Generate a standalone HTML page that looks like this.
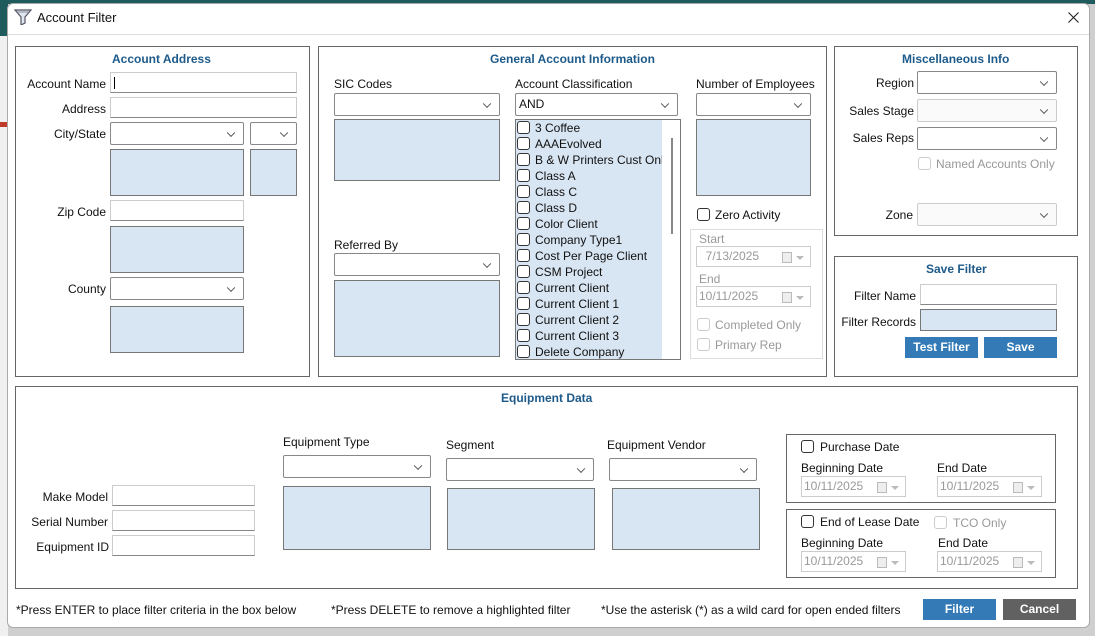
<!DOCTYPE html>
<html><head><meta charset="utf-8"><style>
*{box-sizing:border-box;margin:0;padding:0}
body{width:1095px;height:636px;overflow:hidden;background:#cfcfcf;font-family:"Liberation Sans",Arial,sans-serif;font-size:12px;color:#111;position:relative}
.a{position:absolute}
.dlg{left:7px;top:3px;width:1083px;height:625px;background:#fff;border:1px solid #aaa;border-radius:6px;overflow:hidden}
.box{position:absolute;border:1px solid #666}
.t{position:absolute;font-weight:bold;color:#1d5a8a;white-space:nowrap}
.l{position:absolute;white-space:nowrap;line-height:14px}
.r{text-align:right}
.in{position:absolute;border:1px solid #ccc;border-bottom-color:#888;background:#fff}
.sel{position:absolute;border:1px solid #888;border-radius:2px;background:#fff}
.sel::after{content:"";position:absolute;right:9px;top:50%;width:5px;height:5px;border-right:1px solid #555;border-bottom:1px solid #555;transform:translateY(-70%) rotate(45deg)}
.sel.d{border-color:#ccc;background:#fafafa}
.lst{position:absolute;border:1px solid #777;background:#d8e5f2}
.cb{position:absolute;width:13px;height:13px;border:1px solid #333;border-radius:3px;background:#fff}
.cb.d{border-color:#ccc}
.g{color:#999}
.dt{position:absolute;border:1px solid #ccc;background:#fff;color:#999;padding-left:2px;line-height:19px}
.dt::after{content:"";position:absolute;right:18px;top:5px;width:8px;height:9px;border:1px solid #bbb;background:#eee}
.dt::before{content:"";position:absolute;right:6px;top:9px;border:4px solid transparent;border-top-color:#bbb;border-bottom:0}
.btn{position:absolute;background:#337ab7;color:#fff;font-weight:bold;text-align:center;line-height:21px}
</style></head><body>
<div class="a" style="left:0;top:0;width:1095px;height:4px;background:#1f5a5c"></div>
<div class="a" style="left:0;top:0;width:8px;height:36px;background:#1f5a5c"></div>
<div class="a" style="left:0;top:36px;width:8px;height:600px;background:#f0f0f0"></div>
<div class="a" style="left:0;top:122px;width:8px;height:5px;background:#c0392b"></div>
<div class="a dlg"></div>
<svg class="a" style="left:14px;top:9px" width="18" height="16" viewBox="0 0 18 16"><path d="M1 1h16l-6 7v6l-4 2V8z" fill="#dfe6ee" stroke="#556" stroke-width="1.2"/><path d="M3 3h12" stroke="#889" /></svg>
<div class="l" style="left:37px;top:11px;font-size:13px">Account Filter</div>
<svg class="a" style="left:1068px;top:12px" width="11" height="11" viewBox="0 0 11 11"><path d="M0.5 0.5L10.5 10.5M10.5 0.5L0.5 10.5" stroke="#222" stroke-width="1.1"/></svg>
<div class="a" style="left:8px;top:34px;width:1081px;height:1px;background:#ddd"></div>

<div class="box" style="left:15px;top:46px;width:295px;height:331px"></div>
<div class="t" style="left:112px;top:52px">Account Address</div>
<div class="l r" style="left:10px;top:77px;width:96px">Account Name</div>
<div class="in" style="left:110px;top:72px;width:187px;height:21px"><div class="a" style="left:3px;top:4px;width:1px;height:12px;background:#000"></div></div>
<div class="l r" style="left:10px;top:102px;width:96px">Address</div>
<div class="in" style="left:110px;top:97px;width:187px;height:21px"></div>
<div class="l r" style="left:10px;top:127px;width:96px">City/State</div>
<div class="sel" style="left:110px;top:122px;width:134px;height:23px"></div>
<div class="sel" style="left:250px;top:122px;width:47px;height:23px"></div>
<div class="lst" style="left:110px;top:149px;width:134px;height:47px"></div>
<div class="lst" style="left:250px;top:149px;width:47px;height:47px"></div>
<div class="l r" style="left:10px;top:205px;width:96px">Zip Code</div>
<div class="in" style="left:110px;top:200px;width:134px;height:21px"></div>
<div class="lst" style="left:110px;top:226px;width:134px;height:47px"></div>
<div class="l r" style="left:10px;top:282px;width:96px">County</div>
<div class="sel" style="left:110px;top:277px;width:134px;height:23px"></div>
<div class="lst" style="left:110px;top:306px;width:134px;height:47px"></div>

<div class="box" style="left:318px;top:46px;width:509px;height:331px"></div>
<div class="t" style="left:490px;top:52px">General Account Information</div>
<div class="l" style="left:334px;top:77px">SIC Codes</div>
<div class="sel" style="left:334px;top:93px;width:166px;height:23px"></div>
<div class="lst" style="left:334px;top:119px;width:166px;height:62px"></div>
<div class="l" style="left:334px;top:238px">Referred By</div>
<div class="sel" style="left:334px;top:253px;width:166px;height:23px"></div>
<div class="lst" style="left:334px;top:280px;width:166px;height:77px"></div>
<div class="l" style="left:515px;top:77px">Account Classification</div>
<div class="sel" style="left:515px;top:93px;width:163px;height:23px"><span class="a" style="left:3px;top:3px">AND</span></div>
<div class="lst" style="left:515px;top:119px;width:166px;height:241px;overflow:hidden">
<div class="a" style="left:146px;top:0;width:19px;height:240px;background:#fff"></div>
<div class="a" style="left:155px;top:18px;width:2px;height:96px;background:#888"></div>
</div>
<div class="l" style="left:696px;top:77px">Number of Employees</div>
<div class="sel" style="left:696px;top:93px;width:115px;height:23px"></div>
<div class="lst" style="left:696px;top:119px;width:115px;height:77px"></div>
<div class="cb" style="left:697px;top:208px"></div>
<div class="l" style="left:715px;top:208px">Zero Activity</div>
<div class="a" style="left:690px;top:229px;width:133px;height:130px;border:1px solid #ddd"></div>
<div class="l g" style="left:699px;top:232px">Start</div>
<div class="dt" style="left:696px;top:246px;width:115px;height:21px">&nbsp;&nbsp;7/13/2025</div>
<div class="l g" style="left:699px;top:272px">End</div>
<div class="dt" style="left:696px;top:286px;width:115px;height:21px">10/11/2025</div>
<div class="cb d" style="left:697px;top:318px"></div>
<div class="l g" style="left:715px;top:318px">Completed Only</div>
<div class="cb d" style="left:697px;top:338px"></div>
<div class="l g" style="left:715px;top:338px">Primary Rep</div>

<div class="box" style="left:834px;top:46px;width:244px;height:190px"></div>
<div class="t" style="left:902px;top:52px">Miscellaneous Info</div>
<div class="l r" style="left:834px;top:76px;width:80px">Region</div>
<div class="sel" style="left:917px;top:71px;width:140px;height:23px"></div>
<div class="l r" style="left:834px;top:104px;width:80px">Sales Stage</div>
<div class="sel d" style="left:917px;top:99px;width:140px;height:23px"></div>
<div class="l r" style="left:834px;top:131px;width:80px">Sales Reps</div>
<div class="sel" style="left:917px;top:127px;width:140px;height:23px"></div>
<div class="cb d" style="left:918px;top:157px"></div>
<div class="l g" style="left:936px;top:157px">Named Accounts Only</div>
<div class="l r" style="left:834px;top:208px;width:79px">Zone</div>
<div class="sel d" style="left:917px;top:203px;width:140px;height:23px"></div>

<div class="box" style="left:834px;top:256px;width:244px;height:121px"></div>
<div class="t" style="left:926px;top:262px">Save Filter</div>
<div class="l r" style="left:834px;top:289px;width:82px">Filter Name</div>
<div class="in" style="left:920px;top:284px;width:137px;height:21px"></div>
<div class="l r" style="left:834px;top:315px;width:82px">Filter Records</div>
<div class="a" style="left:920px;top:309px;width:137px;height:22px;background:#d8e5f2;border:1px solid #777"></div>
<div class="btn" style="left:905px;top:337px;width:73px;height:21px">Test Filter</div>
<div class="btn" style="left:984px;top:337px;width:73px;height:21px">Save</div>

<div class="box" style="left:15px;top:386px;width:1063px;height:203px"></div>
<div class="t" style="left:501px;top:391px">Equipment Data</div>
<div class="l r" style="left:10px;top:490px;width:98px">Make Model</div>
<div class="in" style="left:112px;top:485px;width:143px;height:21px"></div>
<div class="l r" style="left:10px;top:515px;width:98px">Serial Number</div>
<div class="in" style="left:112px;top:510px;width:143px;height:21px"></div>
<div class="l r" style="left:10px;top:540px;width:99px">Equipment ID</div>
<div class="in" style="left:112px;top:535px;width:143px;height:21px"></div>
<div class="l" style="left:283px;top:435px">Equipment Type</div>
<div class="sel" style="left:283px;top:455px;width:148px;height:23px"></div>
<div class="lst" style="left:283px;top:486px;width:148px;height:64px"></div>
<div class="l" style="left:446px;top:438px">Segment</div>
<div class="sel" style="left:446px;top:458px;width:148px;height:23px"></div>
<div class="lst" style="left:447px;top:488px;width:148px;height:62px"></div>
<div class="l" style="left:607px;top:438px">Equipment Vendor</div>
<div class="sel" style="left:609px;top:458px;width:148px;height:23px"></div>
<div class="lst" style="left:612px;top:488px;width:148px;height:62px"></div>

<div class="box" style="left:786px;top:434px;width:270px;height:69px"></div>
<div class="cb" style="left:801px;top:440px"></div>
<div class="l" style="left:820px;top:440px">Purchase Date</div>
<div class="l" style="left:801px;top:461px">Beginning Date</div>
<div class="l" style="left:937px;top:461px">End Date</div>
<div class="dt" style="left:801px;top:476px;width:105px;height:21px">10/11/2025</div>
<div class="dt" style="left:937px;top:476px;width:105px;height:21px">10/11/2025</div>

<div class="box" style="left:786px;top:509px;width:270px;height:69px"></div>
<div class="cb" style="left:801px;top:515px"></div>
<div class="l" style="left:820px;top:515px">End of Lease Date</div>
<div class="cb d" style="left:934px;top:516px"></div>
<div class="l g" style="left:953px;top:516px">TCO Only</div>
<div class="l" style="left:801px;top:536px">Beginning Date</div>
<div class="l" style="left:938px;top:536px">End Date</div>
<div class="dt" style="left:801px;top:551px;width:105px;height:21px">10/11/2025</div>
<div class="dt" style="left:937px;top:551px;width:105px;height:21px">10/11/2025</div>

<div class="l" style="left:16px;top:603px">*Press ENTER to place filter criteria in the box below</div>
<div class="l" style="left:331px;top:603px">*Press DELETE to remove a highlighted filter</div>
<div class="l" style="left:601px;top:603px">*Use the asterisk (*) as a wild card for open ended filters</div>
<div class="btn" style="left:923px;top:599px;width:73px;height:21px">Filter</div>
<div class="btn" style="left:1003px;top:599px;width:73px;height:21px;background:#616161">Cancel</div>

<div class="cb" style="left:517px;top:121px"></div><div class="l" style="left:535px;top:121px">3 Coffee</div>
<div class="cb" style="left:517px;top:137px"></div><div class="l" style="left:535px;top:137px">AAAEvolved</div>
<div class="cb" style="left:517px;top:153px"></div><div class="l" style="left:535px;top:153px;width:127px;overflow:hidden">B &amp; W Printers Cust Only</div>
<div class="cb" style="left:517px;top:169px"></div><div class="l" style="left:535px;top:169px">Class A</div>
<div class="cb" style="left:517px;top:185px"></div><div class="l" style="left:535px;top:185px">Class C</div>
<div class="cb" style="left:517px;top:201px"></div><div class="l" style="left:535px;top:201px">Class D</div>
<div class="cb" style="left:517px;top:217px"></div><div class="l" style="left:535px;top:217px">Color Client</div>
<div class="cb" style="left:517px;top:233px"></div><div class="l" style="left:535px;top:233px">Company Type1</div>
<div class="cb" style="left:517px;top:249px"></div><div class="l" style="left:535px;top:249px">Cost Per Page Client</div>
<div class="cb" style="left:517px;top:265px"></div><div class="l" style="left:535px;top:265px">CSM Project</div>
<div class="cb" style="left:517px;top:281px"></div><div class="l" style="left:535px;top:281px">Current Client</div>
<div class="cb" style="left:517px;top:297px"></div><div class="l" style="left:535px;top:297px">Current Client 1</div>
<div class="cb" style="left:517px;top:313px"></div><div class="l" style="left:535px;top:313px">Current Client 2</div>
<div class="cb" style="left:517px;top:329px"></div><div class="l" style="left:535px;top:329px">Current Client 3</div>
<div class="cb" style="left:517px;top:345px"></div><div class="l" style="left:535px;top:345px">Delete Company</div>
</body></html>
